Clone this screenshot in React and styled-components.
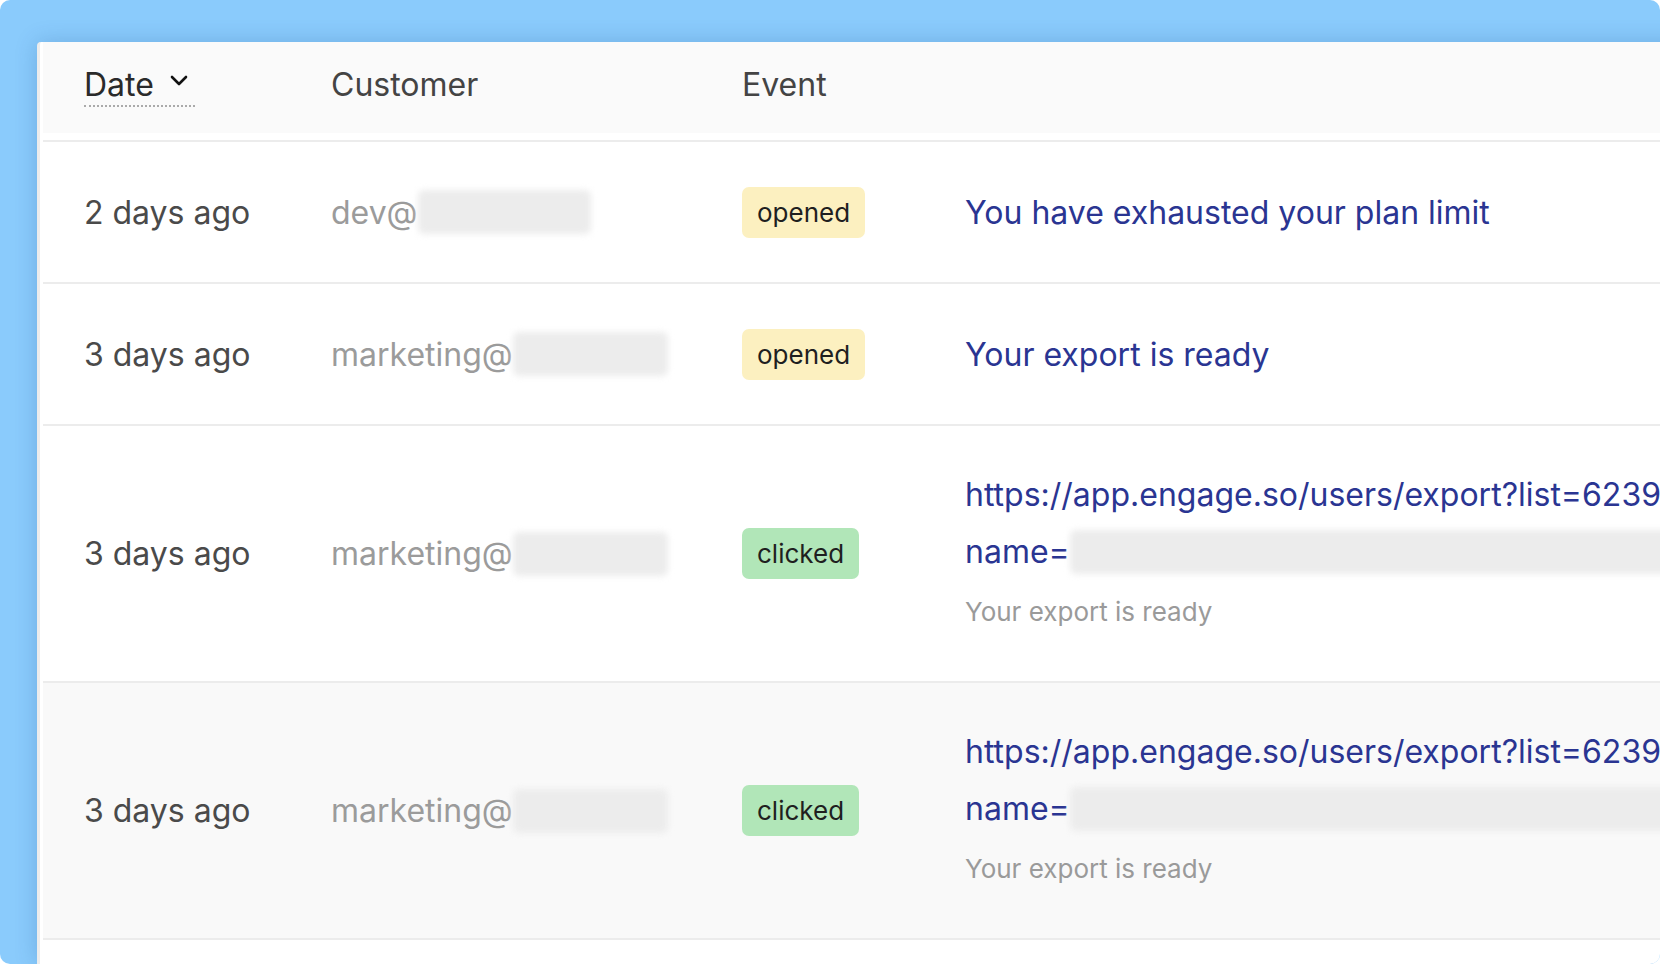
import React from "react";
import styled, { createGlobalStyle } from "styled-components";

const GlobalStyle = createGlobalStyle`
  html, body { margin: 0; padding: 0; background: #ffffff; overflow: hidden; }
  body {
    font-family: Inter, "Noto Sans", "Liberation Sans", sans-serif;
    -webkit-font-smoothing: antialiased;
  }
`;

const COLS = "247px 411px 223px 1fr";

const Frame = styled.div`
  width: 1660px;
  height: 964px;
  box-sizing: border-box;
  background: #8acbfc;
  border-radius: 10px;
  overflow: hidden;
  padding: 42px 0 0 37px;
  display: flex;
`;

const Panel = styled.div`
  flex: 0 0 1800px;
  background: #ffffff;
  border-left: 3px solid #ececec;
  padding-left: 3px;
  border-top-left-radius: 4px;
  box-shadow: 0 0 22px rgba(20, 70, 130, 0.22);
`;

const Head = styled.div`
  padding-bottom: 7px;
  border-bottom: 2px solid #ececec;
`;

const HeadRow = styled.div`
  display: grid;
  grid-template-columns: ${COLS};
  align-items: start;
  height: 91px;
  box-sizing: border-box;
  padding: 24px 0 0 41px;
  background: #fafafa;
`;

const HeadCell = styled.div`
  font-size: 32px;
  line-height: 38px;
  color: #444444;
`;

const SortLabel = styled.span`
  display: inline-flex;
  align-items: center;
  gap: 16px;
  padding: 0 7px 1px 0;
  border-bottom: 2px dotted #aaaaaa;
  color: #2a2a2a;
  font-size: 32px;
  line-height: 38px;
`;

const ChevronIcon = styled.svg`
  flex: 0 0 auto;
  margin-bottom: 8px;
`;

const Row = styled.div`
  display: grid;
  grid-template-columns: ${COLS};
  align-items: center;
  min-height: 142px;
  box-sizing: border-box;
  padding: 40px 0 40px 41px;
  border-bottom: 2px solid #ececec;
  background: ${(p) => (p.$shaded ? "#f9f9f9" : "#ffffff")};
`;

const DateCell = styled.div`
  font-size: 32px;
  line-height: 57px;
  color: #4a4a4a;
`;

const CustomerCell = styled.div`
  display: flex;
  align-items: center;
  font-size: 32px;
  line-height: 57px;
  color: #9b9b9b;
  white-space: nowrap;
`;

const Redacted = styled.span`
  display: inline-block;
  flex: 0 0 auto;
  width: ${(p) => p.$w}px;
  height: 44px;
  background: #ececec;
  border-radius: 6px;
  filter: blur(3px);
`;

const Badge = styled.span`
  justify-self: start;
  display: inline-block;
  height: 51px;
  line-height: 51px;
  padding: 0 15px;
  border-radius: 7px;
  font-size: 26px;
  color: #1f1f1f;
  background: ${(p) => (p.$tone === "green" ? "#b1e6b8" : "#fcf0c0")};
`;

const Message = styled.div`
  color: #2a3592;
  font-size: 32px;
  line-height: 57px;
  white-space: nowrap;
`;

const MessageLine = styled.div`
  display: flex;
  align-items: center;
`;

const Snippet = styled.div`
  font-size: 26px;
  line-height: 39px;
  color: #9a9a9a;
  margin: 12px 0 10px;
`;

const Chevron = () => (
  <ChevronIcon width="18" height="12" viewBox="0 0 18 12" aria-hidden="true">
    <polyline
      points="2,2 9,9 16,2"
      fill="none"
      stroke="#111"
      strokeWidth="2.6"
      strokeLinecap="round"
      strokeLinejoin="round"
    />
  </ChevronIcon>
);

const rows = [
  { date: "2 days ago", user: "dev@", blur: 173, event: "opened", msg: "You have exhausted your plan limit" },
  { date: "3 days ago", user: "marketing@", blur: 155, event: "opened", msg: "Your export is ready" },
  { date: "3 days ago", user: "marketing@", blur: 155, event: "clicked", link: true },
  { date: "3 days ago", user: "marketing@", blur: 155, event: "clicked", link: true, shaded: true },
];

export default function App() {
  return (
    <>
      <GlobalStyle />
      <Frame>
        <Panel>
          <Head>
            <HeadRow>
              <HeadCell>
                <SortLabel>
                  Date
                  <Chevron />
                </SortLabel>
              </HeadCell>
              <HeadCell>Customer</HeadCell>
              <HeadCell>Event</HeadCell>
              <HeadCell />
            </HeadRow>
          </Head>
          {rows.map((r, i) => (
            <Row key={i} $shaded={r.shaded}>
              <DateCell>{r.date}</DateCell>
              <CustomerCell>
                {r.user}
                <Redacted $w={r.blur} />
              </CustomerCell>
              <Badge $tone={r.event === "clicked" ? "green" : "yellow"}>{r.event}</Badge>
              {r.link ? (
                <Message>
                  <MessageLine>https://app.engage.so/users/export?list=6239</MessageLine>
                  <MessageLine>
                    name=
                    <Redacted $w={640} />
                  </MessageLine>
                  <Snippet>Your export is ready</Snippet>
                </Message>
              ) : (
                <Message>{r.msg}</Message>
              )}
            </Row>
          ))}
        </Panel>
      </Frame>
    </>
  );
}
